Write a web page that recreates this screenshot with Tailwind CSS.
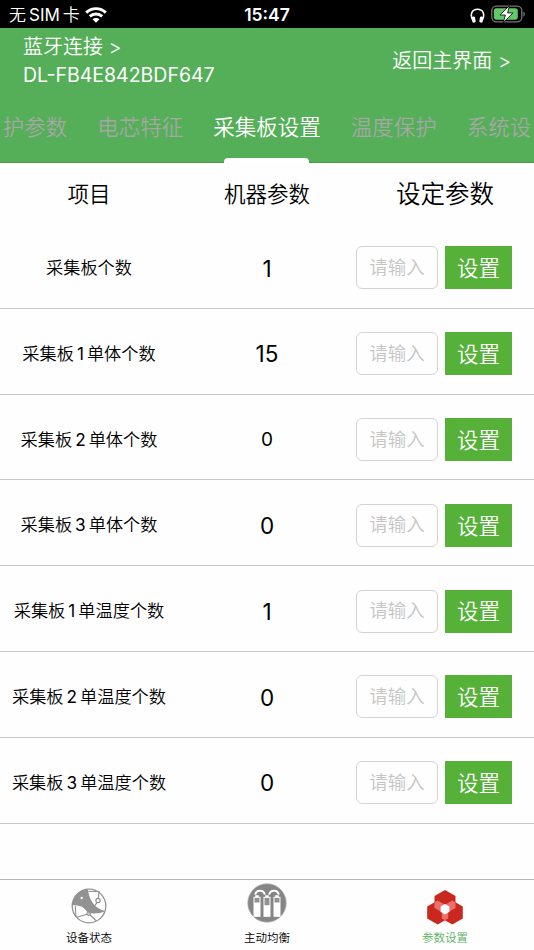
<!DOCTYPE html>
<html lang="zh-CN">
<head>
  <meta charset="UTF-8" />
  <meta name="viewport" content="width=device-width, initial-scale=1.0"/>
  <title>参数设置</title>
  <script src="https://cdn.jsdelivr.net/npm/@tailwindcss/browser@4"></script>
</head>
<body class="bg-[#fefefe] font-['Inter','Noto_Sans_CJK_SC',sans-serif] font-[350] text-black w-[534px] h-[950px] overflow-hidden flex flex-col">

  <!-- Status bar -->
  <div class="h-7 shrink-0 bg-black text-white grid grid-cols-3 items-center pl-[9px] pr-[9px] pt-[2px]">
    <div class="flex items-center gap-[5px]">
      <span class="text-[17px] leading-none whitespace-nowrap">无<span class="mx-[3px] font-normal">SIM</span>卡</span>
      <svg class="w-[22px] h-4" viewBox="0 0 22 16" fill="none" stroke="white" stroke-width="2.9">
        <path d="M1.2 5.6C6.7.3 15.3.3 20.8 5.6"/>
        <path d="M4.8 9.4C8.3 6.1 13.7 6.1 17.2 9.4"/>
        <path d="M11 15.8L7.6 12.4C9.5 10.6 12.5 10.6 14.4 12.4Z" fill="white" stroke="none"/>
      </svg>
    </div>
    <div class="text-center text-[17.5px] leading-none font-semibold">15:47</div>
    <div class="flex items-center justify-end gap-[6px]">
      <svg class="w-[15px] h-[15px]" viewBox="0 0 15 15">
        <path d="M2.8 12.2C-.4 6.2 2 1.2 7.5 1.2S15.4 6.2 12.2 12.2" fill="none" stroke="white" stroke-width="1.6"/>
        <rect x="2" y="8.6" width="3.4" height="6" rx="1.4" fill="white" transform="rotate(-10 3.7 11.6)"/>
        <rect x="9.6" y="8.6" width="3.4" height="6" rx="1.4" fill="white" transform="rotate(10 11.3 11.6)"/>
      </svg>
      <svg class="w-[35px] h-[18px] -mr-[1px] -mt-[2px]" viewBox="0 0 35 18">
        <rect x=".8" y="1.2" width="30" height="15.6" rx="4.6" fill="none" stroke="#777" stroke-width="1.3"/>
        <rect x="2.8" y="3.2" width="24" height="11.6" rx="2.8" fill="#62c968"/>
        <path d="M32.3 6.4c2 .8 2 4.4 0 5.2z" fill="#777"/>
        <path d="M18.4 .6L9 10H14.4L12.4 17.6L22 8H16.6Z" fill="white" stroke="black" stroke-width=".8"/>
      </svg>
    </div>
  </div>

  <!-- Header -->
  <header class="h-[135px] shrink-0 bg-[#55ae58] border-b border-[#459c49] text-white flex flex-col">
    <div class="h-[63px] flex justify-between items-center px-[23px]">
      <div class="text-[20px] leading-7 pt-[3px]">
        <div>蓝牙连接 &gt;</div>
        <div class="text-[19.5px] font-normal">DL-FB4E842BDF647</div>
      </div>
      <div class="text-[20px] pt-[3px]">返回主界面 &gt;</div>
    </div>
    <!-- Scrollable tabs -->
    <nav class="flex-1 -mb-px flex justify-center whitespace-nowrap text-[21.5px] text-[#a3a8a3]">
      <div class="flex gap-[30px] shrink-0">
        <span class="pt-[20px]">护参数</span>
        <span class="pt-[20px]">电芯特征</span>
        <div class="flex flex-col items-center justify-between text-white">
          <span class="pt-[20px]">采集板设置</span>
          <span class="w-[85px] h-[5px] rounded-t-sm bg-white"></span>
        </div>
        <span class="pt-[20px]">温度保护</span>
        <span class="pt-[20px]">系统设</span>
      </div>
    </nav>
  </header>

  <main class="flex-1">
    <div class="h-[60px] grid grid-cols-3 items-center text-center pt-[3px]">
      <div class="text-[21.5px]">项目</div>
      <div class="text-[21.5px]">机器参数</div>
      <div class="text-[24.5px]">设定参数</div>
    </div>
    <div id="paramList"></div>
  </main>

  <!-- Bottom tab bar -->
  <footer class="h-[71px] shrink-0 border-t border-[#b5b5b5] grid grid-cols-3 text-[11.5px] leading-4">
    <div class="flex flex-col items-center pt-[8px]">
      <svg class="w-9 h-9" viewBox="0 0 36 36" fill="none" stroke="#929292">
        <circle cx="18" cy="18" r="16.8" stroke-width="1.3"/>
        <path d="M1.2 17.5C1.5 8.5 8 1.8 17 1.2C18 12 23 20 34.4 23.2C29 25.5 23 25.8 17 25C14 20.5 10 16.5 1.2 17.5Z" fill="#929292" stroke="none"/>
        <circle cx="10.7" cy="10" r="1.2" fill="white" stroke="none"/>
        <path d="M17.5 3.5L28 3.5L27.3 10M26 14.7L23.5 18M17 26L5 29.5M4.3 18L5 29M19 27L25.5 33" stroke-width="1.1"/>
        <circle cx="27" cy="12.5" r="2.1" fill="white" stroke-width="1.2"/>
        <circle cx="17.6" cy="25.7" r="1.8" fill="#c9c9c9" stroke-width="1"/>
      </svg>
      <span class="mt-[6px]">设备状态</span>
    </div>
    <div class="flex flex-col items-center pt-[3px]">
      <svg class="w-10 h-10" viewBox="0 0 40 40">
        <circle cx="20" cy="20" r="19.2" fill="#858585" stroke="#b0b0b0" stroke-width=".8"/>
        <path d="M8.3 11.6C9 6.4 17 6.4 17.8 11.6M22.2 11.6C23 6.4 31 6.4 31.7 11.6" fill="none" stroke="white" stroke-width="2"/>
        <g fill="#929292" stroke="white" stroke-width="1">
          <rect x="7" y="14.3" width="6" height="19"/>
          <rect x="17" y="14.3" width="6" height="19"/>
          <rect x="27" y="14.3" width="6" height="19"/>
        </g>
        <path d="M7 19.5h6v13.8H7zM17 22.3h6v11h-6zM27 19.5h6v13.8h-6zM8.2 12.3h3.6v2H8.2zM18.2 12.3h3.6v2h-3.6zM28.2 12.3h3.6v2h-3.6z" fill="white"/>
      </svg>
      <span class="mt-[7px]">主动均衡</span>
    </div>
    <div class="flex flex-col items-center pt-[10px] text-[#5bb35f]">
      <svg class="w-9 h-[35px]" viewBox="0 0 36 35">
        <path d="M18 0L28.5 6V18L18 24L7.5 18V6Z" fill="#c9281f"/>
        <path d="M10.7 10.5L21.2 16.5V28.5L10.7 34.5L.2 28.5V16.5Z" fill="#c9281f"/>
        <path d="M25.3 10.5L35.8 16.5V28.5L25.3 34.5L14.8 28.5V16.5Z" fill="#c9281f"/>
        <path d="M10.7 10.5L18 14.7L25.3 10.5L28.5 12.3V18L21.2 22.2V28.5L18 30.3L14.8 28.5V22.2L7.5 18V12.3Z" fill="#ec6f6b"/>
        <path d="M18 14L22.4 16.5V21.8L18 24.4L13.6 21.8V16.5Z" fill="white"/>
      </svg>
      <span class="mt-[5px]">参数设置</span>
    </div>
  </footer>

  <script>
    const params = [
      { label: '采集板个数', value: 1 },
      { label: '采集板<span class="mx-[3px] font-normal">1</span>单体个数', value: 15 },
      { label: '采集板<span class="mx-[3px] font-normal">2</span>单体个数', value: 0, small: true },
      { label: '采集板<span class="mx-[3px] font-normal">3</span>单体个数', value: 0 },
      { label: '采集板<span class="mx-[3px] font-normal">1</span>单温度个数', value: 1 },
      { label: '采集板<span class="mx-[3px] font-normal">2</span>单温度个数', value: 0 },
      { label: '采集板<span class="mx-[3px] font-normal">3</span>单温度个数', value: 0 },
    ];

    const paramList = document.getElementById('paramList');

    params.forEach((p) => {
      const row = document.createElement('div');
      row.className = 'h-[85.8px] grid grid-cols-3 items-center text-center border-b border-[#c8c8c8]';
      row.innerHTML = `
        <div class="text-[17.2px] whitespace-nowrap pt-[5px]">${p.label}</div>
        <div class="${p.small ? 'text-[19px]' : 'text-[22.5px]'} font-normal pt-[6px]">${p.value}</div>
        <div class="flex gap-[7px] pt-[5px]">
          <div class="w-[82px] h-[43px] border border-[#d4d4d4] rounded-md text-[18.5px] text-[#c6c6c6] flex items-center justify-center">请输入</div>
          <button class="w-[67px] h-[43px] bg-[#56b139] text-white text-[21.5px] font-[350] pt-px">设置</button>
        </div>
      `;
      paramList.appendChild(row);
    });
  </script>

</body>
</html>
